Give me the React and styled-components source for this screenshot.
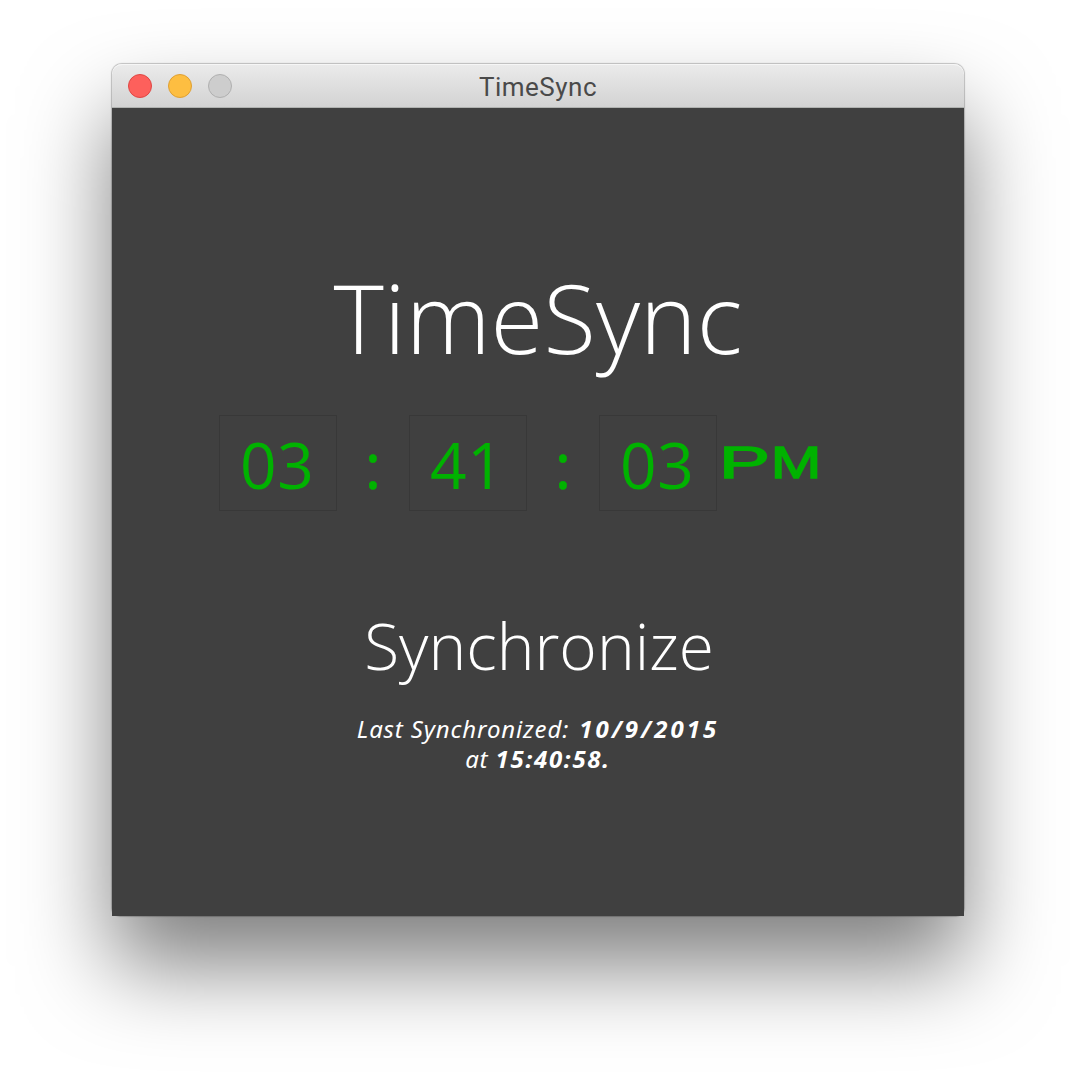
import React from "react";
import styled, { createGlobalStyle } from "styled-components";

const GlobalStyle = createGlobalStyle`
  * { box-sizing: border-box; }
  body { margin: 0; background: #fff; overflow: hidden; }
`;

const Desktop = styled.main`
  height: 1076px;
  padding: 64px 112px 160px;
  overflow: hidden;
`;

const Window = styled.section`
  height: 852px;
  display: flex;
  flex-direction: column;
  border-radius: 10px 10px 8px 8px;
  box-shadow: 0 0 1px 1px rgba(0, 0, 0, 0.22), 0 50px 88px rgba(0, 0, 0, 0.5);
`;

const TitleBar = styled.header`
  height: 44px;
  display: grid;
  grid-template-columns: 1fr auto 1fr;
  align-items: center;
  padding: 0 16px;
  border-radius: 10px 10px 0 0;
  background: linear-gradient(#ebebeb, #d2d2d2);
  box-shadow: inset 0 1px #f6f6f6, inset 0 -1px #b0b2b0;
`;

const Controls = styled.div`
  display: flex;
  gap: 16px;
`;

const Control = styled.span`
  width: 24px;
  height: 24px;
  border-radius: 50%;
  border: 1px solid ${(p) => p.$edge};
  background: ${(p) => p.$fill};
`;

const WindowTitle = styled.span`
  height: 44px;
  font: 400 26px/46px Roboto, sans-serif;
  letter-spacing: 0.5px;
  color: #4a4a4a;
`;

const Content = styled.div`
  flex: 1;
  display: flex;
  flex-direction: column;
  align-items: center;
  background: #404040;
  color: #fff;
  padding-top: 144px;
`;

const Heading = styled.h1`
  margin: 0;
  font: 300 96px/130px "Open Sans", sans-serif;
  letter-spacing: 0.1px;
  white-space: nowrap;
`;

const Clock = styled.div`
  width: 638px;
  height: 96px;
  margin-top: 33px;
  display: flex;
  align-items: stretch;
  color: #00b200;
  font: 400 64px/98px "Open Sans", sans-serif;
`;

const Digits = styled.span`
  width: 118px;
  border: 1px solid #383838;
  padding-left: 20px;
  letter-spacing: 0.6px;
`;

const Colon = styled.span`
  width: 72px;
  padding-top: 1px;
  text-align: center;
  -webkit-text-stroke: 0.5px currentColor;
`;

const Meridiem = styled.span`
  display: flex;
  gap: 5px;
  margin-left: 7px;
  font: 400 45px/95px "Liberation Sans", Arial, sans-serif;
  -webkit-text-stroke: 1.4px currentColor;
`;

const WideLetter = styled.span`
  display: block;
  width: 45px;
  text-indent: ${(p) => p.$indent}px;
  transform: scaleX(${(p) => p.$stretch});
  transform-origin: left;
`;

const SyncButton = styled.button`
  margin: 91px 0 0;
  padding: 0 0 0 2px;
  border: 0;
  background: none;
  color: inherit;
  font: 300 64px/88px "Open Sans", sans-serif;
`;

const Status = styled.p`
  margin: 24px 0 0;
  text-align: center;
  white-space: nowrap;
  font: italic 400 24px/30px "Noto Sans", sans-serif;
  letter-spacing: 0.85px;
`;

const Strong = styled.strong`
  font-weight: 700;
  margin-left: ${(p) => p.$lead || 0}px;
  letter-spacing: ${(p) => p.$spacing}px;
`;

export default function App() {
  return (
    <>
      <GlobalStyle />
      <Desktop>
        <Window>
          <TitleBar>
            <Controls>
              <Control $fill="#fd605c" $edge="#df4744" />
              <Control $fill="#fdbe41" $edge="#dfa033" />
              <Control $fill="#cdcdcd" $edge="#b0b0b0" />
            </Controls>
            <WindowTitle>TimeSync</WindowTitle>
          </TitleBar>
          <Content>
            <Heading>TimeSync</Heading>
            <Clock>
              <Digits>03</Digits>
              <Colon>:</Colon>
              <Digits>41</Digits>
              <Colon>:</Colon>
              <Digits>03</Digits>
              <Meridiem>
                <WideLetter $stretch={1.7} $indent={-3}>P</WideLetter>
                <WideLetter $stretch={1.35} $indent={-2.5}>M</WideLetter>
              </Meridiem>
            </Clock>
            <SyncButton>Synchronize</SyncButton>
            <Status>
              Last Synchronized: <Strong $spacing={3} $lead={3}>10/9/2015</Strong>
              <br />
              at <Strong $spacing={1.7}>15:40:58.</Strong>
            </Status>
          </Content>
        </Window>
      </Desktop>
    </>
  );
}
